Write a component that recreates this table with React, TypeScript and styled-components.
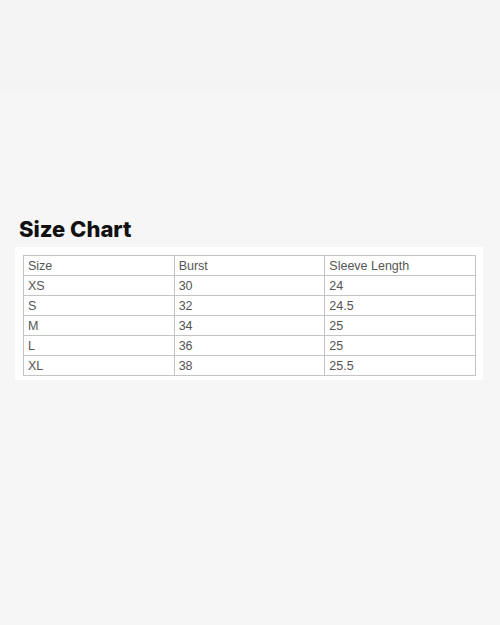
import styled, { createGlobalStyle } from 'styled-components';

const rows = [
  ['XS', '30', '24'],
  ['S', '32', '24.5'],
  ['M', '34', '25'],
  ['L', '36', '25'],
  ['XL', '38', '25.5'],
];

export default function App() {
  return (
    <Page>
      <GlobalStyle />
      <TopBand />
      <Content>
        <Title>Size Chart</Title>
        <Card>
          <Table>
            <tbody>
              <tr>
                <Cell>Size</Cell>
                <Cell>Burst</Cell>
                <Cell>Sleeve Length</Cell>
              </tr>
              {rows.map((r) => (
                <tr key={r[0]}>
                  {r.map((v, i) => (
                    <Cell key={i}>{v}</Cell>
                  ))}
                </tr>
              ))}
            </tbody>
          </Table>
        </Card>
      </Content>
    </Page>
  );
}

const GlobalStyle = createGlobalStyle`
  html, body {
    margin: 0;
    padding: 0;
    background: #f6f6f6;
  }
`;

const Page = styled.div`
  width: 500px;
  height: 625px;
  background: #f6f6f6;
  display: flex;
  flex-direction: column;
  overflow: hidden;
`;

const TopBand = styled.div`
  height: 93px;
  background: #f4f4f4;
  flex-shrink: 0;
`;

const Content = styled.main`
  padding: 122px 17px 0 15px;
`;

const Title = styled.h2`
  margin: 0 0 4px 4px;
  font-family: Inter, 'Noto Sans', sans-serif;
  font-weight: 800;
  font-size: 22px;
  line-height: 28px;
  letter-spacing: 0;
  color: #111;
`;

const Card = styled.div`
  background: #fff;
  padding: 8px 7px 4px 8px;
`;

const Table = styled.table`
  width: 100%;
  border-collapse: collapse;
  table-layout: fixed;
  border: 1px solid #c4c4c4;
`;

const Cell = styled.td`
  border: 1px solid #c4c4c4;
  height: 19px;
  padding: 0 4px;
  font-family: 'Liberation Sans', Arial, sans-serif;
  font-size: 12.5px;
  color: #555;
  text-align: left;
`;
